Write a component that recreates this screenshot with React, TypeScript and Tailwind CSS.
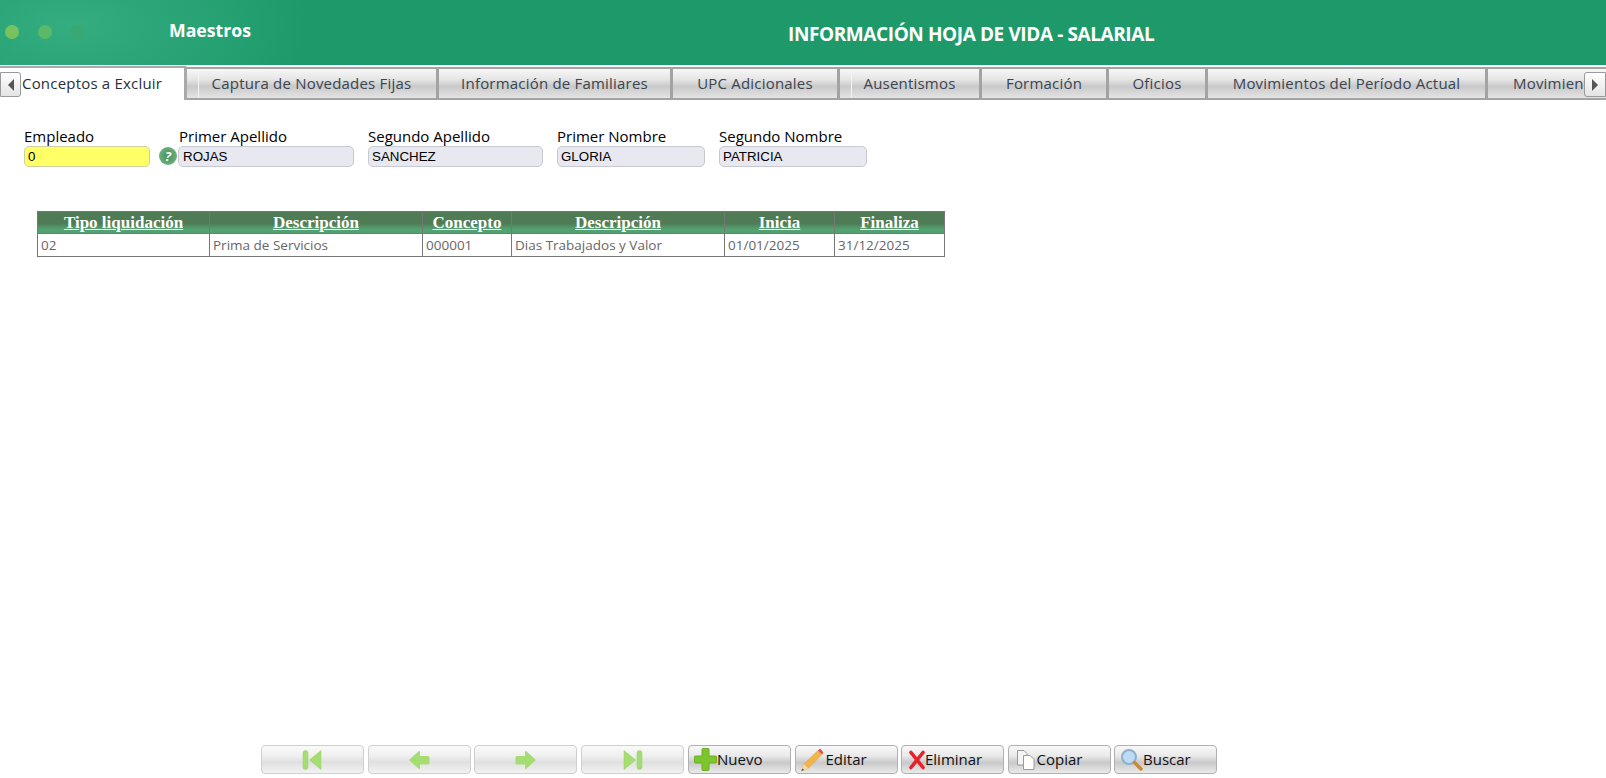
const tabs = [
  { label: 'Captura de Novedades Fijas', w: 'w-[252px]', tick: true },
  { label: 'Información de Familiares', w: 'w-[234px]', tick: false },
  { label: 'UPC Adicionales', w: 'w-[167px]', tick: false },
  { label: 'Ausentismos', w: 'w-[142px]', tick: true },
  { label: 'Formación', w: 'w-[127px]', tick: false },
  { label: 'Oficios', w: 'w-[99px]', tick: false },
  { label: 'Movimientos del Período Actual', w: 'w-[280px]', tick: false },
];

const fields = [
  { label: 'Primer Apellido', value: 'ROJAS', w: 'w-[176px]', lab: 'pl-[1px]', pad: 'pl-[4px]' },
  { label: 'Segundo Apellido', value: 'SANCHEZ', w: 'w-[175px]', lab: '', pad: 'pl-[3px]' },
  { label: 'Primer Nombre', value: 'GLORIA', w: 'w-[148px]', lab: '', pad: 'pl-[3px]' },
  { label: 'Segundo Nombre', value: 'PATRICIA', w: 'w-[148px]', lab: '', pad: 'pl-[3px]' },
];

const cols = [
  { title: 'Tipo liquidación', value: '02', w: 'w-[172px]' },
  { title: 'Descripción', value: 'Prima de Servicios', w: 'w-[213px]' },
  { title: 'Concepto', value: '000001', w: 'w-[89px]' },
  { title: 'Descripción', value: 'Dias Trabajados y Valor', w: 'w-[213px]' },
  { title: 'Inicia', value: '01/01/2025', w: 'w-[110px]' },
  { title: 'Finaliza', value: '31/12/2025', w: 'w-[109px]' },
];

function Arrow({ kind }: { kind: 'first' | 'prev' | 'next' | 'last' }) {
  const flip = kind === 'next' || kind === 'last';
  return (
    <svg width="22" height="20" viewBox="0 0 22 20" className={flip ? '-scale-x-100' : ''}>
      {kind === 'first' || kind === 'last' ? (
        <g fill="#a6dd72" stroke="#93d062" strokeWidth="0.5">
          <rect x="1" y="0.5" width="5" height="19" rx="2.5" />
          <path d="M7.5 10 L19 0.5 V19.5 Z" strokeLinejoin="round" />
        </g>
      ) : (
        <path d="M1 10 L11 1 Q12 0.5 12 2 V6 H20 Q21.5 6 21.5 7.5 V13 Q21.5 14.5 20 14.5 H12 V18 Q12 19.5 11 19 Z" fill="#a6dd72" />
      )}
    </svg>
  );
}

function Btn({ children, off, className = '' }: { children: React.ReactNode; off?: boolean; className?: string }) {
  return (
    <div
      className={`flex h-[29px] w-[103px] items-center rounded-[4px] border ${
        off
          ? 'border-[#cfcfcf] bg-[linear-gradient(#fafafa,#f0f0f0_35%,#e0e0e0_60%,#f2f2f2)]'
          : 'border-[#b0b0b0] bg-[linear-gradient(#f8f8f8,#eaeaea_35%,#c9c9c9_62%,#ebebeb)]'
      } ${className}`}
    >
      {children}
    </div>
  );
}

export default function App() {
  return (
    <div className="relative h-[778px] w-[1606px] overflow-hidden bg-white font-['Open_Sans',sans-serif]">
      <header className="flex h-[65px] bg-[#1e9a6a] text-white">
        <div className="flex w-[430px] shrink-0 items-start bg-[radial-gradient(ellipse_240px_120px_at_70px_25px,#34ad80,#1e9a6a)]">
          <span className="ml-[5px] mt-[25px] h-[14px] w-[14px] rounded-full bg-[#78c35f]" />
          <span className="ml-[19px] mt-[25px] h-[14px] w-[14px] rounded-full bg-[#5cb869]" />
          <span className="ml-[19px] mt-[25px] h-[14px] w-[14px] rounded-full bg-[#3aa872]" />
          <span className="ml-[84px] mt-[17px] text-[17.7px] font-bold leading-[26px]">Maestros</span>
        </div>
        <h1 className="ml-[358px] mt-[20px] whitespace-nowrap text-[19px] font-bold leading-[28px] tracking-[-0.4px]">INFORMACIÓN HOJA DE VIDA - SALARIAL</h1>
      </header>

      <nav className="relative mt-[1px] flex h-[34px] overflow-hidden text-[15px] tracking-[0.2px] text-[#3a4450]">
        <div className="flex h-[34px] w-[187px] shrink-0 items-center rounded-tr-[2px] border-r-[3px] border-t-2 border-[#a9a9a9] bg-white pb-[1px] pl-[22px] text-[#2a2f36]">
          Conceptos a Excluir
        </div>
        {tabs.map(t => (
          <div key={t.label} className={`${t.w} relative mt-[1px] flex h-[33px] shrink-0 items-center justify-center whitespace-nowrap border-y-2 border-r-[3px] border-[#a3a3a3] bg-[linear-gradient(#f7f7f7,#e6e6e6_35%,#c9c9c9_60%,#e4e4e4)]`}>
            {t.tick && <span className="absolute left-[11px] top-0 h-full w-px bg-[#f4f4f4]" />}
            {t.label}
          </div>
        ))}
        <div className="mt-[1px] flex h-[33px] flex-1 items-center overflow-hidden whitespace-nowrap border-y-2 border-[#a3a3a3] bg-[linear-gradient(#f7f7f7,#e6e6e6_35%,#c9c9c9_60%,#e4e4e4)] pl-[25px]">
          Movimientos
        </div>
        <button className="absolute left-0 top-[6px] flex h-[25px] w-[21px] items-center justify-center rounded-r-[3px] border border-[#9a9a9a] bg-[linear-gradient(#fff,#e4e4e4)]">
          <span className="h-0 w-0 border-y-[6px] border-r-[6px] border-y-transparent border-r-[#555]" />
        </button>
        <button className="absolute right-0 top-[6px] flex h-[25px] w-[22px] items-center justify-center rounded-l-[3px] border border-[#9a9a9a] bg-[linear-gradient(#fff,#e4e4e4)]">
          <span className="h-0 w-0 border-y-[6px] border-l-[6px] border-y-transparent border-l-[#555]" />
        </button>
      </nav>

      <section className="ml-[24px] mt-[26px] flex gap-[14px] text-[15px] leading-[20px] text-black">
        <div className="mr-[14px] w-[126px]">
          <div className="h-[20px]">Empleado</div>
          <div className="flex h-[21px] items-center rounded-[5px] border border-[#cfcfa0] bg-[#ffff66] pl-[3px] font-['Liberation_Sans',sans-serif] text-[13.33px]">0</div>
        </div>
        {fields.map(f => (
          <div key={f.label}>
            <div className={`h-[20px] ${f.lab}`}>{f.label}</div>
            <div className={`${f.w} ${f.pad} flex h-[21px] items-center rounded-[5px] border border-[#c8c8d0] bg-[#e8e8f0] font-['Liberation_Sans',sans-serif] text-[13.33px]`}>{f.value}</div>
          </div>
        ))}
      </section>

      <div className="absolute left-[159px] top-[147px] flex h-[18px] w-[18px] items-center justify-center rounded-full bg-[radial-gradient(circle,#3f9158,#6fae7d_70%,#d5e8d9)] text-[13px] font-bold italic leading-none text-white">?</div>

      <div className="ml-[37px] mt-[44px] w-[908px] border border-[#777]">
        <div className="flex h-[22px] border-b border-[#777] bg-[linear-gradient(#4f7c55,#4f7c55_55%,#53a070_80%)] font-['Liberation_Serif',serif] text-[17px] font-bold text-white">
          {cols.map((c, i) => (
            <div key={i} className={`${c.w} text-center leading-[21px] underline ${i < 5 ? 'border-r border-[#777]' : ''}`}>{c.title}</div>
          ))}
        </div>
        <div className="flex h-[22px] text-[13.5px] text-[#666]">
          {cols.map((c, i) => (
            <div key={i} className={`${c.w} pl-[3px] leading-[22px] ${i < 5 ? 'border-r border-[#777]' : ''}`}>{c.value}</div>
          ))}
        </div>
      </div>

      <footer className="absolute left-[261px] top-[745px] flex gap-[3.5px] text-[15px] text-[#111]">
        <Btn off className="justify-center"><Arrow kind="first" /></Btn>
        <Btn off className="justify-center"><Arrow kind="prev" /></Btn>
        <Btn off className="justify-center"><Arrow kind="next" /></Btn>
        <Btn off className="justify-center"><Arrow kind="last" /></Btn>
        <Btn className="ml-[1px] pl-[5px]">
          <svg width="23" height="23" viewBox="0 0 23 23" className="shrink-0"><path d="M8 1.5 Q8 0.5 9 0.5 H14 Q15 0.5 15 1.5 V8 H21.5 Q22.5 8 22.5 9 V14 Q22.5 15 21.5 15 H15 V21.5 Q15 22.5 14 22.5 H9 Q8 22.5 8 21.5 V15 H1.5 Q0.5 15 0.5 14 V9 Q0.5 8 1.5 8 H8 Z" fill="#7cc52c" stroke="#6cae24" /></svg>
          <span>Nuevo</span>
        </Btn>
        <Btn className="pl-[4px]">
          <svg width="24" height="24" viewBox="0 0 24 24" className="shrink-0"><path d="M1.5 23 L4 16 L18 2.5 L22 6.5 L8 20.5 Z" fill="#f2b54a" stroke="#d99a35" strokeWidth="0.5" /><path d="M18 2.5 L20 0.5 L23.5 4.5 L22 6.5 Z" fill="#d9534f" /><path d="M1.5 23 L4 16 L8 20.5 Z" fill="#f3dcb0" /><path d="M1.5 23 L2.3 20.5 L4 22 Z" fill="#444" /></svg>
          <span className="ml-[2px]">Editar</span>
        </Btn>
        <Btn className="pl-[7px]">
          <svg width="16" height="20" viewBox="0 0 16 20" className="shrink-0"><path d="M2 2.5 L14 17.5 M14 2.5 L2 17.5" stroke="#e8212b" strokeWidth="3.6" strokeLinecap="round" /></svg>
          <span>Eliminar</span>
        </Btn>
        <Btn className="pl-[7px]">
          <svg width="21" height="22" viewBox="0 0 21 22" className="shrink-0"><path d="M1.5 1.5 H8 L11 4.5 V16 H1.5 Z" fill="#f4f4f4" stroke="#9a9a9a" /><path d="M7.5 6.5 H14 L18 10.5 V20.5 H7.5 Z" fill="#fff" stroke="#9a9a9a" /></svg>
          <span>Copiar</span>
        </Btn>
        <Btn className="pl-[5px]">
          <svg width="23" height="23" viewBox="0 0 23 23" className="shrink-0"><circle cx="9" cy="9" r="7" fill="#bcdcf5" stroke="#8fb0c8" strokeWidth="2" /><path d="M14.5 14.5 L21 21" stroke="#c68a3a" strokeWidth="3.5" strokeLinecap="round" /></svg>
          <span>Buscar</span>
        </Btn>
      </footer>
    </div>
  );
}
